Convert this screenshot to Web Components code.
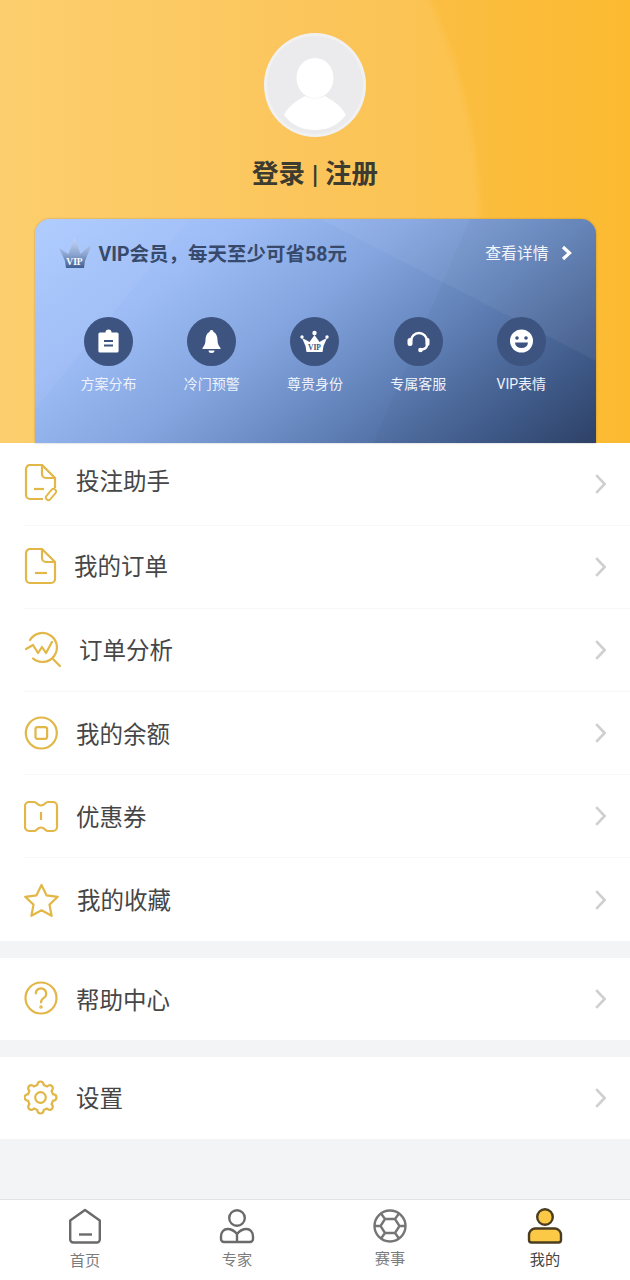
<!DOCTYPE html>
<html lang="zh-CN">
<head>
<meta charset="utf-8">
<title>我的</title>
<style>
html,body{margin:0;padding:0;background:#f3f4f6;}
body{width:630px;height:1280px;overflow:hidden;font-family:Roboto,"Noto Sans CJK SC",sans-serif;}
svg{display:block}
</style>
</head>
<body>
<template id="t-page">
<style>
:host{display:flex;flex-direction:column;width:630px;height:1280px;background:#f3f4f6}
.main{flex:1;display:flex;flex-direction:column;gap:17px;min-height:0}
</style>
<slot name="hero"></slot>
<div class="main"><slot></slot></div>
<slot name="tabs"></slot>
</template>

<template id="t-hero">
<style>
:host{display:flex;flex-direction:column;align-items:center;height:443px;box-sizing:border-box;padding-top:33px;
background:radial-gradient(ellipse 485px 520px at 0 230px,rgba(255,255,255,.085) 98%,rgba(255,255,255,0) 100%),linear-gradient(90deg,#fdca60 0%,#fbc04c 50%,#fbba30 100%);}
.avatar{width:102px;height:104px;border-radius:50%;background:#ebebed;border:3px solid #f1f1f1;box-sizing:border-box;overflow:hidden;flex:none}
h1{margin:18px 0 0;font:700 26.5px/38px Roboto,"Noto Sans CJK SC",sans-serif;color:#3d3a30;height:64px;box-sizing:border-box}
::slotted(vip-card){flex:1}
</style>
<div class="avatar"><svg width="96" height="98" viewBox="0 0 96 98"><ellipse cx="48" cy="42" rx="18.500" ry="20" fill="#fff"/><path d="M17 79 C24 66 36 62 38 60 Q48 65 58 60 C60 62 72 66 79 79 C70 91 58 94 48 94 C38 94 26 91 17 79Z" fill="#fff"/></svg></div>
<h1><slot name="title"></slot></h1>
<slot></slot>
</template>

<template id="t-card">
<style>
:host{display:block;position:relative;width:561px;box-sizing:border-box;border-radius:15px 15px 0 0;overflow:hidden;
background:linear-gradient(142deg,#aecbff 0%,#9dbcf6 25%,#84a5df 45%,#6283ba 65%,#425d8d 85%,#2f4369 100%);box-shadow:0 0 2px rgba(60,60,60,.4)}
.facets{position:absolute;inset:0}
.head{position:relative;display:flex;align-items:center;height:71px;padding:0 22px 0 23px}
.crown{flex:none;margin:0 7px 4px 0}
.title{font-weight:700;font-size:19.5px;line-height:26px;color:#384a6b;flex:1;white-space:nowrap}
.more{display:flex;align-items:center;gap:12px;font-size:15.800px;color:#f2f5fb;margin:0 2px 4px 0}
.grid{position:relative;display:grid;grid-template-columns:repeat(5,103.2px);padding:27px 0 0 22.5px}
</style>
<svg class="facets" width="561" height="224" viewBox="0 0 561 224"><polygon points="0,0 155,0 0,190" fill="#fff" opacity=".045"/><polygon points="285,0 561,142 561,0" fill="#fff" opacity=".05"/><polygon points="435,0 338,224 561,224 561,0" fill="#000" opacity=".02"/></svg>
<div class="head">
<svg class="crown" width="34" height="32" viewBox="0 0 34 32"><defs><linearGradient id="cg" x1="0" y1="0" x2="0" y2="1"><stop offset="0" stop-color="#c5d6f2"/><stop offset=".55" stop-color="#8ba5cf"/><stop offset="1" stop-color="#3f5e92"/></linearGradient></defs><path d="M8 31 L7 24 L1 11 L7 15 L10.500 17 L16.500 1 L22.500 17 L28 12 L33.500 8 L27 24 L26 31Z" fill="url(#cg)"/><text x="16.500" y="27.500" text-anchor="middle" font-family="Liberation Serif,serif" font-weight="700" font-size="9.500" fill="#fff">VIP</text></svg>
<div class="title"><slot name="title"></slot></div>
<div class="more"><slot name="more"></slot><svg width="11" height="16" viewBox="0 0 11 16"><path d="M2 2 L8.500 8 L2 14" fill="none" stroke="#fff" stroke-width="3.200"/></svg></div>
</div>
<div class="grid"><slot></slot></div>
</template>

<template id="t-feature">
<style>
:host{display:flex;flex-direction:column;align-items:center;color:#eef2fa;font-size:14px;line-height:20px;white-space:nowrap}
.c{width:49px;height:49px;border-radius:50%;background:#3d5480;margin-bottom:8px}
</style>
<div class="c"><slot name="icon"></slot></div>
<slot></slot>
</template>

<template id="t-group">
<style>:host{display:block;background:#fff}</style>
<slot></slot>
</template>

<template id="t-row">
<style>
:host{display:block;height:var(--h,83px);padding-left:24px;background:#fff}
.in{display:flex;align-items:center;height:100%;box-sizing:border-box;border-bottom:1px solid #f7f7f8;padding-right:24px}
:host(:last-child) .in{border-bottom:0}
.ic{width:40px;height:40px;flex:none}
.t{flex:1;font-size:23.500px;line-height:32px;color:#464646;white-space:nowrap}
</style>
<div class="in"><div class="ic"><slot name="icon"></slot></div><span class="t"><slot></slot></span>
<svg width="11" height="20" viewBox="0 0 11 20"><path d="M1.200 1.200 L9.600 10 L1.200 18.800" fill="none" stroke="#cfcfd1" stroke-width="2.600"/></svg></div>
</template>

<template id="t-tabs">
<style>:host{display:grid;grid-template-columns:154px 150px 156px 154px;padding:0 8px;height:81px;box-sizing:border-box;background:#fff;border-top:1px solid #e2e3e5;flex:none}</style>
<slot></slot>
</template>

<template id="t-tab">
<style>
:host{display:flex;flex-direction:column;align-items:center;gap:var(--g,5px);padding-top:6px;font-size:15.200px;line-height:20px;color:#7c7c7c;white-space:nowrap}
:host([active]){color:#444}
</style>
<slot name="icon"></slot><div><slot></slot></div>
</template>

<script>
function plain(name,tpl){
  customElements.define(name,class extends HTMLElement{
    constructor(){super();this.attachShadow({mode:'open'}).appendChild(document.getElementById(tpl).content.cloneNode(true));}
  });
}
plain('app-page','t-page');
plain('profile-hero','t-hero');
plain('vip-card','t-card');
plain('vip-feature','t-feature');
plain('menu-group','t-group');
plain('tab-bar','t-tabs');
plain('tab-item','t-tab');
customElements.define('menu-row',class extends HTMLElement{
  constructor(){super();this.attachShadow({mode:'open'}).appendChild(document.getElementById('t-row').content.cloneNode(true));}
  connectedCallback(){
    const t=this.shadowRoot.querySelector('.t');
    t.style.paddingLeft=(this.getAttribute('indent')||'13')+'px';
    const d=parseFloat(this.getAttribute('nudge')||'0');
    if(d<0)t.style.marginBottom=(-2*d)+'px'; else if(d>0)t.style.marginTop=(2*d)+'px';
  }
});
</script>
<app-page>
<profile-hero slot="hero">
  <span slot="title">登录 | 注册</span>
  <vip-card>
    <span slot="title">VIP会员，每天至少可省58元</span>
    <span slot="more">查看详情</span>
    <vip-feature>方案分布<svg slot="icon" width="49" height="49" viewBox="0 0 49 49"><path d="M16 15.500h5.500a3 3 0 0 1 6 0H33a1.600 1.600 0 0 1 1.600 1.600V34a1.600 1.600 0 0 1-1.600 1.600H16a1.600 1.600 0 0 1-1.600-1.600V17.100A1.600 1.600 0 0 1 16 15.500Z" fill="#fff"/><path d="M20 24h9M20 28.500h9" stroke="#3d5480" stroke-width="1.800"/></svg></vip-feature>
    <vip-feature>冷门预警<svg slot="icon" width="49" height="49" viewBox="0 0 49 49"><path d="M24.500 13a2 2 0 0 1 2 2c2.500 1 4 4 4 8 0 4 1.500 6 3 8v1h-18v-1c1.500-2 3-4 3-8 0-4 1.500-7 4-8a2 2 0 0 1 2-2Z" fill="#fff"/><path d="M21.500 33.500h6a3 2.500 0 0 1-6 0Z" fill="#fff"/></svg></vip-feature>
    <vip-feature>尊贵身份<svg slot="icon" width="49" height="49" viewBox="0 0 49 49"><path d="M16.500 35 L15.500 29 L12 21 L17 23.500 L19.500 25 L24.500 18 L29.500 25 L32 23.500 L37 21 L33.500 29 L32.500 35Z" fill="#fff"/><circle cx="12" cy="20" r="1.700" fill="#fff"/><circle cx="37" cy="20" r="1.700" fill="#fff"/><circle cx="24.500" cy="16" r="2.200" fill="#fff"/><text x="24.500" y="32.500" text-anchor="middle" font-family="Liberation Serif,serif" font-weight="700" font-size="7.500" fill="#3d5480">VIP</text></svg></vip-feature>
    <vip-feature>专属客服<svg slot="icon" width="49" height="49" viewBox="0 0 49 49"><path d="M17 24a8 8 0 0 1 16 0v3.500c0 3-2 4.500-5 5" fill="none" stroke="#fff" stroke-width="2.400"/><rect x="13.500" y="21" width="5" height="8" rx="2.500" fill="#fff"/><rect x="31.500" y="21" width="4" height="8" rx="2" fill="#fff"/><circle cx="26.500" cy="33" r="2.300" fill="#fff"/></svg></vip-feature>
    <vip-feature>VIP表情<svg slot="icon" width="49" height="49" viewBox="0 0 49 49"><circle cx="24.500" cy="24" r="11.500" fill="#fff"/><circle cx="20" cy="21" r="1.800" fill="#3d5480"/><circle cx="29" cy="21" r="1.800" fill="#3d5480"/><path d="M18 25.500h13a6.500 5.500 0 0 1-13 0Z" fill="#3d5480"/></svg></vip-feature>
  </vip-card>
</profile-hero>

<menu-group>
  <menu-row nudge="-2" indent="12">投注助手<svg slot="icon" width="40" height="40" viewBox="0 0 40 40" fill="none" stroke="#e2b647" stroke-width="2.200"><g transform="translate(0 -1)"><path d="M19 36H6a4 4 0 0 1-4-4V6a4 4 0 0 1 4-4H18L31 15V25"/><path d="M18 2V11a4 4 0 0 0 4 4H31"/><path d="M10 26H20"/><rect x="-2.600" y="-6.500" width="5.200" height="13" rx="2.600" transform="translate(27 31.500) rotate(40)" stroke-width="1.800" fill="#fff"/></g></svg></menu-row>
  <menu-row indent="10">我的订单<svg slot="icon" width="40" height="40" viewBox="0 0 40 40" fill="none" stroke="#e2b647" stroke-width="2.200"><path d="M6 36a4 4 0 0 1-4-4V6a4 4 0 0 1 4-4H18L31 15V32a4 4 0 0 1-4 4Z"/><path d="M18 2V11a4 4 0 0 0 4 4H31"/><path d="M11 26H23"/></svg></menu-row>
  <menu-row nudge="1" indent="15">订单分析<svg slot="icon" width="40" height="40" viewBox="0 0 40 40" fill="none" stroke="#e2b647" stroke-width="2.200" stroke-linecap="round" stroke-linejoin="round"><path d="M6 10A14.500 14.500 0 1 1 9 28.500"/><path d="M29 29L36 36"/><path d="M2 19L9 15L14 23L18 17L22 23L28 12"/></svg></menu-row>
  <menu-row nudge="2" indent="12">我的余额<svg slot="icon" width="40" height="40" viewBox="0 0 40 40" fill="none" stroke="#e2b647" stroke-width="2.200"><circle cx="17.300" cy="20" r="15.500"/><rect x="11.500" y="14.200" width="11.600" height="11.600" rx="2"/></svg></menu-row>
  <menu-row nudge="2" indent="12">优惠券<svg slot="icon" width="40" height="40" viewBox="0 0 40 40" fill="none" stroke="#e2b647" stroke-width="2.200"><path d="M5 6H10C13 6 13 9.500 17 9.500C21 9.500 21 6 24 6H29a4 4 0 0 1 4 4V31a4 4 0 0 1-4 4H24C21 35 21 31.500 17 31.500C13 31.500 13 35 10 35H5a4 4 0 0 1-4-4V10a4 4 0 0 1 4-4Z"/><path d="M17 16V24"/></svg></menu-row>
  <menu-row nudge="1" indent="13">我的收藏<svg slot="icon" width="40" height="40" viewBox="0 0 40 40" fill="none" stroke="#e2b647" stroke-width="2.200" stroke-linejoin="round"><path d="M17.500 5L22.500 15.300L33.800 16.800L25.500 24.600L27.600 35.800L17.500 30.300L7.400 35.800L9.500 24.600L1.200 16.800L12.500 15.300Z"/></svg></menu-row>
</menu-group>
<menu-group style="--h:82px">
  <menu-row nudge="2" indent="12">帮助中心<svg slot="icon" width="40" height="40" viewBox="0 0 40 40" fill="none" stroke="#e2b647" stroke-width="2.200" stroke-linecap="round"><circle cx="17" cy="19" r="15.500"/><path d="M11.800 14.500a5.200 5.200 0 1 1 8 4.400c-1.800 1.200-2.800 2.200-2.800 4.600"/><circle cx="17" cy="28" r=".7"/></svg></menu-row>
</menu-group>
<menu-group style="--h:82px">
  <menu-row nudge="1" indent="12">设置<svg slot="icon" width="40" height="40" viewBox="0 0 40 40" fill="none" stroke="#e2b647" stroke-width="2.200"><path d="M16.500 3.500c2 0 3 1 3.300 3.600l3.200 1.300c2-1.600 3.500-1.700 4.900-.3s1.300 2.900-.3 4.900l1.300 3.200c2.600.3 3.600 1.300 3.600 3.300s-1 3-3.600 3.300l-1.300 3.200c1.600 2 1.700 3.500.3 4.900s-2.900 1.300-4.900-.3l-3.200 1.300c-.3 2.600-1.300 3.600-3.300 3.600s-3-1-3.300-3.600L10 30.600c-2 1.600-3.500 1.700-4.900.3s-1.300-2.900.3-4.900l-1.300-3.200c-2.600-.3-3.600-1.300-3.600-3.300s1-3 3.600-3.300l1.300-3.200c-1.600-2-1.700-3.500-.3-4.900s2.900-1.300 4.900.3l3.200-1.300c.3-2.600 1.300-3.600 3.300-3.600Z"/><circle cx="16.500" cy="19.500" r="5.300"/></svg></menu-row>
</menu-group>

<tab-bar slot="tabs">
  <tab-item style="--g:5px">首页<svg slot="icon" width="40" height="40" viewBox="0 0 40 40" fill="none" stroke="#6a6a6a" stroke-width="2.400" stroke-linejoin="round"><path d="M20 4L34.800 14.600V33.500a3 3 0 0 1-3 3H8.200a3 3 0 0 1-3-3V14.600Z"/><path d="M14 28.500H27"/></svg></tab-item>
  <tab-item style="--g:4px">专家<svg slot="icon" width="40" height="40" viewBox="0 0 40 40" fill="none" stroke="#6a6a6a" stroke-width="2.400"><circle cx="20" cy="12" r="7.800"/><path d="M20 36H7a3 3 0 0 1-3-3v-2.500c0-4.500 3-7.500 6.500-7.500 4 0 7 2 9.500 5 2.500-3 5.500-5 9.500-5 3.500 0 6.500 3 6.500 7.500V33a3 3 0 0 1-3 3ZM20 28V36"/></svg></tab-item>
  <tab-item style="--g:3px">赛事<svg slot="icon" width="40" height="40" viewBox="0 0 40 40" fill="none" stroke="#757575" stroke-width="2.400"><circle cx="20" cy="20" r="15.500"/><path d="M15 13H25L29.500 20L25 27H15L10.500 20ZM15 13L11 7.500M25 13L29 7.500M29.500 20H35.500M25 27L29 32.500M15 27L11 32.500M10.500 20H4.500"/></svg></tab-item>
  <tab-item active style="--g:4px">我的<svg slot="icon" width="40" height="40" viewBox="0 0 40 40" fill="#fbc945" stroke="#4b3d20" stroke-width="2.400"><circle cx="20" cy="11" r="7.800"/><path d="M10 22.500H30a6.500 6.500 0 0 1 6 7V34a2.500 2.500 0 0 1-2.500 2.500H6.500A2.500 2.500 0 0 1 4 34v-4.500a6.500 6.500 0 0 1 6-7Z"/></svg></tab-item>
</tab-bar>
</app-page>
</body>
</html>
